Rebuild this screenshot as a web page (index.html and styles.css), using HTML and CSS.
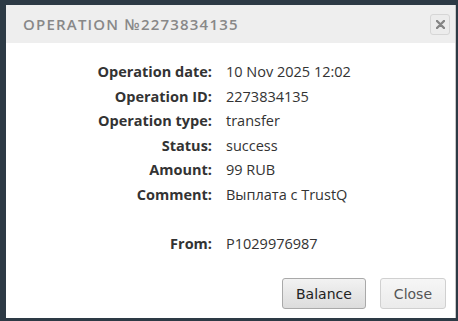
FILE: index.html
```html
<!DOCTYPE html>
<html lang="en">
<head>
    <meta charset="UTF-8">
    <title>Operation</title>
    <link rel="stylesheet" href="styles.css">
</head>
<body>
    <div class="dialog">
        <div class="dialog-header">
            <span class="dialog-title">OPERATION №2273834135</span>
            <button class="close-x">
                <svg width="9" height="9" viewBox="0 0 9 9">
                    <path d="M1 1L8 8M8 1L1 8" stroke="#858585" stroke-width="2.4" stroke-linecap="round"/>
                </svg>
            </button>
        </div>

        <div class="dialog-body">
            <dl class="info">
                <dt>Operation date:</dt><dd>10 Nov 2025 12:02</dd>
                <dt>Operation ID:</dt><dd>2273834135</dd>
                <dt>Operation type:</dt><dd>transfer</dd>
                <dt>Status:</dt><dd>success</dd>
                <dt>Amount:</dt><dd>99 RUB</dd>
                <dt>Comment:</dt><dd>Выплата с TrustQ</dd>
                <dt class="blank"></dt><dd class="blank"></dd>
                <dt>From:</dt><dd>P1029976987</dd>
            </dl>
        </div>

        <div class="dialog-buttons">
            <button class="btn">Balance</button>
            <button class="btn btn-light">Close</button>
        </div>
    </div>
</body>
</html>
```

FILE: styles.css
```css
body {
    margin: 0;
    background: #2d3a45;
    font-family: 'Open Sans', sans-serif;
    height: 321px;
    overflow: hidden;
}

.dialog {
    margin: 5px 0 0 6px;
    width: 450px;
    height: 313px;
    background: #ffffff;
    border-right: 1px solid #c8c8c8;
    box-sizing: border-box;
    display: flex;
    flex-direction: column;
}

.dialog-header {
    height: 38px;
    background: #eeeeee;
    display: flex;
    align-items: center;
    justify-content: space-between;
    padding: 0 5px 0 17px;
}

.dialog-title {
    font-size: 15px;
    font-weight: 600;
    letter-spacing: 1.2px;
    color: #888888;
}

.close-x {
    width: 20px;
    height: 21px;
    padding: 0;
    border: 1px solid #d6d6d6;
    border-radius: 3px;
    background: #ececec;
    display: flex;
    align-items: center;
    justify-content: center;
}

.dialog-body {
    flex: 1;
    padding-top: 17px;
}

.info {
    display: grid;
    grid-template-columns: 206px 1fr;
    column-gap: 14px;
    margin: 0;
    font-size: 14.5px;
    line-height: 24.6px;
    color: #333;
}

.info dt {
    text-align: right;
    font-weight: 700;
}

.info dd {
    margin: 0;
}

.info .blank {
    height: 24.6px;
}

.dialog-buttons {
    display: flex;
    justify-content: flex-end;
    gap: 14px;
    padding: 0 9px 9px 0;
}

.btn {
    height: 31px;
    padding: 0 13px;
    border: 1px solid #a9a9a9;
    border-radius: 3px;
    background: linear-gradient(#f2f2f2, #dcdcdc);
    color: #222;
    font-family: 'DejaVu Sans', sans-serif;
    font-size: 14px;
}

.btn-light {
    border-color: #d0d0d0;
    background: linear-gradient(#f6f6f6, #ebebeb);
    color: #555;
}
```
